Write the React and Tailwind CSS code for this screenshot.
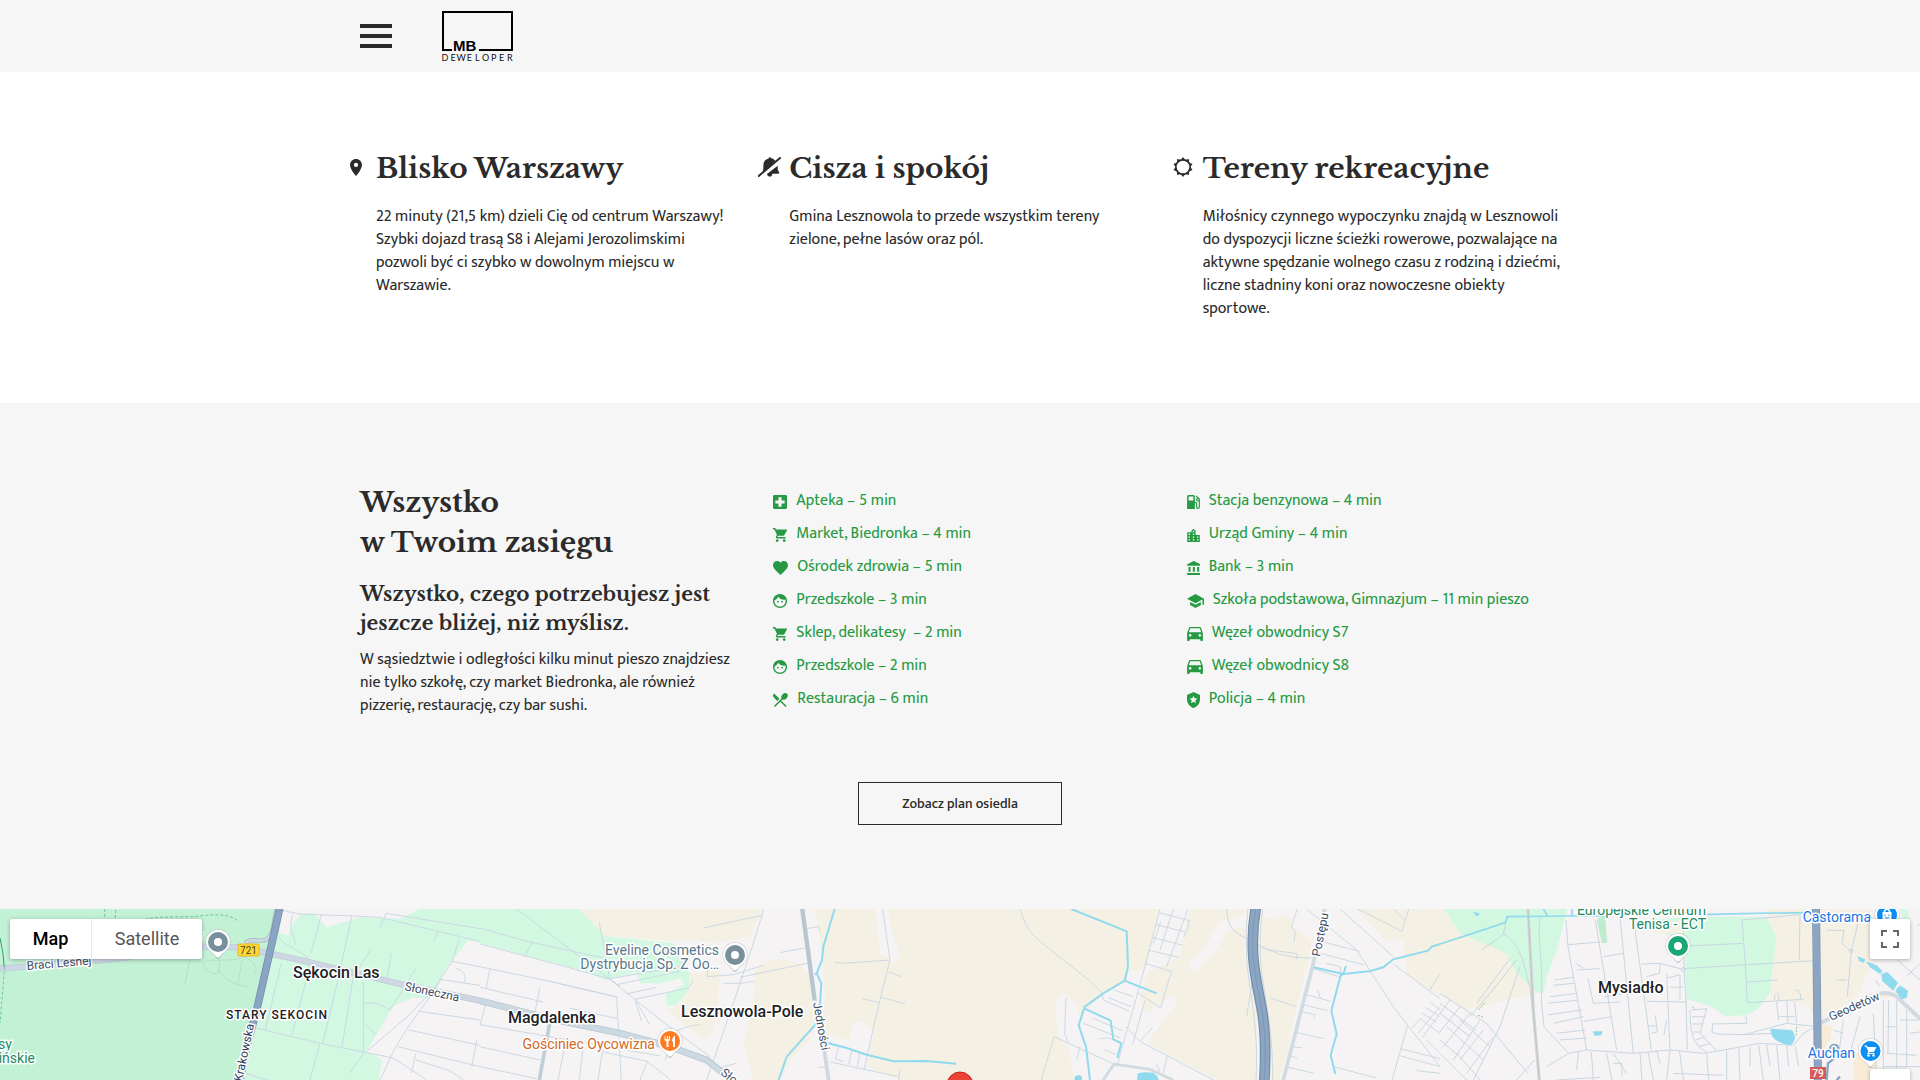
import React from "react";
import {
  MdPlace,
  MdLocalHospital,
  MdShoppingCart,
  MdFavorite,
  MdFace,
  MdRestaurantMenu,
  MdLocalGasStation,
  MdLocationCity,
  MdAccountBalance,
  MdSchool,
  MdDirectionsCar,
  MdLocalPolice,
} from "react-icons/md";

const serif = "font-['Libre_Baskerville','Liberation_Serif',serif] font-bold text-[#2b2b2b]";
const body = "text-base leading-[23px] text-[#2b2b2b]";

function Logo() {
  return (
    <svg width="74" height="54" viewBox="0 -1 74 54" role="img" aria-label="MB Deweloper">
      <path d="M11 40H2V2H71V40H38" fill="none" stroke="#000" strokeWidth="2" />
      <text x="12" y="41" fontFamily="Liberation Sans, sans-serif" fontWeight="700" fontSize="15">MB</text>
      {"DEWELOPER".split("").map((c, i) => (
        <text key={i} x={4 + i * 8.1} y="51" textAnchor="middle" fontFamily="Lato, sans-serif" fontSize="9" fill="#111">{c}</text>
      ))}
    </svg>
  );
}

function BellOff() {
  return (
    <svg width="23" height="20" viewBox="0 0 69 60" fill="#2b2b2b" aria-hidden="true">
      <path d="M12 48C20 36 13 24 19 13C22 7 28 6 31 5C33 0 38 0 40 4C44 5 48 7 52 12Z" />
      <path d="M27 51L59 26C59 34 58 38 63 44C65 47 63 50 61 50H43C43 58 36 61 32 58C29 57 28 54 27 51Z" />
      <path d="M2 57L66 3" stroke="#2b2b2b" strokeWidth="6" strokeLinecap="round" />
    </svg>
  );
}

function Sun() {
  const rays = Array.from({ length: 10 }, (_, i) => i * 36);
  return (
    <svg width="20" height="20" viewBox="-30 -30 60 60" aria-hidden="true">
      <circle r="21.5" fill="none" stroke="#2b2b2b" strokeWidth="5" />
      {rays.map((a) => (
        <path key={a} d="M-7 -21L0 -30L7 -21Z" fill="#2b2b2b" transform={`rotate(${a})`} />
      ))}
    </svg>
  );
}

const features = [
  {
    title: "Blisko Warszawy",
    icon: <MdPlace viewBox="5 2 14 20" className="h-[17px] w-3 text-[#2b2b2b]" />,
    pad: "pr-[14px]",
    lines: [
      "22 minuty (21,5 km) dzieli Cię od centrum Warszawy!",
      "Szybki dojazd trasą S8 i Alejami Jerozolimskimi",
      "pozwoli być ci szybko w dowolnym miejscu w",
      "Warszawie.",
    ],
  },
  {
    title: "Cisza i spokój",
    icon: <BellOff />,
    pad: "pr-2",
    lines: ["Gmina Lesznowola to przede wszystkim tereny", "zielone, pełne lasów oraz pól."],
  },
  {
    title: "Tereny rekreacyjne",
    icon: <Sun />,
    pad: "pr-[10px]",
    lines: [
      "Miłośnicy czynnego wypoczynku znajdą w Lesznowoli",
      "do dyspozycji liczne ścieżki rowerowe, pozwalające na",
      "aktywne spędzanie wolnego czasu z rodziną i dziećmi,",
      "liczne stadniny koni oraz nowoczesne obiekty",
      "sportowe.",
    ],
  },
];

const nearLeft = [
  [MdLocalHospital, "3 3 18 18", "w-[14px] h-[14px]", "Apteka – 5 min"],
  [MdShoppingCart, "1 2 20 20", "w-[14px] h-[14px]", "Market, Biedronka – 4 min"],
  [MdFavorite, "2 3 20 18.35", "w-[15px] h-[14px]", "Ośrodek zdrowia – 5 min"],
  [MdFace, "2 2 20 20", "w-[14px] h-[14px]", "Przedszkole – 3 min"],
  [MdShoppingCart, "1 2 20 20", "w-[14px] h-[14px]", "Sklep, delikatesy\u00a0 – 2 min"],
  [MdFace, "2 2 20 20", "w-[14px] h-[14px]", "Przedszkole – 2 min"],
  [MdRestaurantMenu, "2.7 3 19.2 18.3", "w-[15px] h-[14px]", "Restauracja – 6 min"],
];

const nearRight = [
  [MdLocalGasStation, "4 3 16.5 18", "w-[13px] h-[14px]", "Stacja benzynowa – 4 min"],
  [MdLocationCity, "3 1 18 20", "w-[13px] h-[14px]", "Urząd Gminy – 4 min"],
  [MdAccountBalance, "2 1 19 21", "w-[13px] h-[14px]", "Bank – 3 min"],
  [MdSchool, "1 3 22 18", "w-[17px] h-[14px]", "Szkoła podstawowa, Gimnazjum – 11 min pieszo"],
  [MdDirectionsCar, "3 5 18 16", "w-4 h-[14px]", "Węzeł obwodnicy S7"],
  [MdDirectionsCar, "3 5 18 16", "w-4 h-[14px]", "Węzeł obwodnicy S8"],
  [MdLocalPolice, "3 1 18 22", "w-[13px] h-4", "Policja – 4 min"],
];

function NearList({ items }) {
  return (
    <ul className="pt-px">
      {items.map(([Icon, box, size, label], i) => (
        <li key={i} className="flex h-[33px] items-center gap-[9px] whitespace-nowrap text-base text-[#259a43]">
          <Icon viewBox={box} className={`${size} mt-0.5 shrink-0`} aria-hidden="true" />
          {label}
        </li>
      ))}
    </ul>
  );
}

/* Marker drop with its tip at the bottom, centred on the disc. */
function Pin({ x, y, color, children }) {
  return (
    <g transform={`translate(${x} ${y})`}>
      <path d="M0 17C-2 17 -3 13 -7 10A12.5 12.5 0 1 1 7 10C3 13 2 17 0 17Z" fill="#8b8f94" opacity="0.45" />
      <path d="M0 15.500C-2 15.500 -3 12 -7 9.500A12 12 0 1 1 7 9.500C3 12 2 15.500 0 15.500Z" fill="#fff" />
      <circle r="10" fill={color} />
      {children}
    </g>
  );
}

function Label({ x, y, size = 14, color = "#202124", weight = 500, anchor = "start", rotate, children }) {
  return (
    <text
      x={x}
      y={y}
      fontFamily="Roboto, sans-serif"
      fontSize={size}
      fontWeight={weight}
      fill={color}
      stroke="#fff"
      strokeWidth="3"
      strokeLinejoin="round"
      paintOrder="stroke"
      textAnchor={anchor}
      transform={rotate ? `rotate(${rotate} ${x} ${y})` : undefined}
    >
      {children}
    </text>
  );
}

function TileOne() {
  return (
    <g>
      <path d="M0 0H840L760 380L720 540H0Z" fill="#c3f1d5" />
      <path d="M846 0H1440V128L1404 122L1340 200L1320 240L1290 296L1240 292L1180 318L1100 454L1146 480L1136 540H720L770 370Z" fill="#d2f8e2" />
      <path d="M846 27H1260L1200 56L1080 52L980 82L940 40L900 44L872 80L866 106L838 98Z" fill="#f5f3f4" />
      <g fill="none" stroke="#ccd8e4" strokeWidth="3">
        <path d="M840 30L900 42L1060 48L1140 52L1440 124M1140 84L1158 40L1440 86M964 44L934 158M1056 48L1000 300L968 430M878 44C860 100 890 110 884 134M836 110C850 140 910 150 926 180L922 230M1112 150L1060 230L1026 440M1174 160L1160 240M1314 96L1300 124M1378 116L1356 184L1300 270L1222 350L1100 454M844 190L796 390M922 230L876 404M1090 246V460L1050 520M1248 206L1170 330M1092 310C1130 305 1150 316 1172 332M1094 374C1110 380 1120 396 1124 404M768 384L960 430L1180 474L1220 500L1280 540M960 430L930 540M1356 184L1440 200M1366 206C1400 210 1400 240 1390 252M1320 238L1440 256M1322 240C1290 300 1220 370 1170 476L1140 540M1256 334L1440 360M1226 390L1440 436M1194 440L1440 500M1248 460L1234 520M1430 420L1416 500M1248 480L1350 512L1390 540M736 520L800 540" />
        <path d="M570 180L554 254M660 176L656 220C640 224 606 210 612 190C620 170 700 190 730 170C780 190 770 220 760 222M656 210C680 240 690 250 742 260M726 180L714 250" stroke="#b7dccb" />
      </g>
      <path d="M0 206L250 186L400 170M600 140L720 142L900 180L1200 252L1440 302" fill="none" stroke="#bcc9d8" strokeWidth="19" />
      <path d="M0 206L250 186L400 170M600 140L720 142L900 180L1200 252L1440 302" fill="none" stroke="#cdd6e2" strokeWidth="15" />
      <path d="M736 130C750 110 780 130 800 118C824 100 820 60 830 27" fill="none" stroke="#aab9c8" strokeWidth="13" />
      <path d="M736 130C750 110 780 130 800 118C824 100 820 60 830 27" fill="none" stroke="#cdd9e1" strokeWidth="8" />
      <path d="M840 20L826 84L770 330L740 440L716 560" fill="none" stroke="#728fb1" strokeWidth="23" />
      <path d="M840 20L826 84L770 330L740 440L716 560" fill="none" stroke="#8aa4c1" strokeWidth="18" />
      <g fill="none" stroke="#6cc6a3" strokeWidth="3" strokeDasharray="9 6">
        <path d="M314 27V70M347 30L345 70M436 58C480 46 560 54 600 48C660 40 700 46 716 66M14 200L0 370" />
      </g>
      <path d="M0 114C8 150 12 180 12 200" fill="none" stroke="#2e9e68" strokeWidth="3" />
    </g>
  );
}

function TileTwo() {
  return (
    <g transform="translate(1440 0)">
      <path d="M0 0H290L374 108L580 130L628 220L626 270L590 314L560 318L558 282L610 254L606 234L540 250H480L470 216L380 240L300 210L0 130Z" fill="#d2f8e2" />
      <path d="M290 20H852L810 110L700 130L640 120L576 124L374 108Z" fill="#f5f0e4" />
      <path d="M628 220L720 210L712 330L700 400L670 420L560 330L600 312L626 270Z" fill="#f5f0e4" />
      <path d="M1000 20H1186L1200 160L1240 190L1260 170L1236 90L1222 20H1440V540H1260L1160 500L1180 400L1150 362L1118 372L1110 420L1020 400L1036 300L1020 100Z" fill="#f5f0e4" />
      <path d="M826 210C850 180 900 170 960 190L990 230L1010 340L990 420L930 480L900 540H820L790 430L816 330Z" fill="#f5f0e4" />
      <g fill="none" stroke="#ccd8e4" strokeWidth="3">
        <path d="M0 84L140 124L370 174M110 27L420 260M358 68L390 240M158 124L134 170M0 132L220 190L386 236L560 374L690 470M0 200L200 242L410 290L424 540M200 242L412 292M0 262L190 306M180 262L164 340M30 206L18 266M268 324L412 356M0 374L210 410L540 468M0 440L180 480M0 500L170 536M16 318L0 376M254 440L234 540M312 420L298 540M368 450L354 540M370 456L502 484L572 540M502 484L480 540M410 254L600 214M438 282L530 262M464 298L626 264L640 240M390 236L600 200M464 298L484 362M470 306L508 372M590 392C620 380 640 376 660 374M852 27L820 130L760 310L680 540M670 84L846 46M684 200L682 230L760 224L850 196M780 232L982 190M732 250H780L822 244M900 158L974 144M980 86L1016 80L1020 96M1208 27L1230 180L1190 340L1152 510M1064 186L1090 190L1230 180M1226 216L1264 230M1146 296L1200 308M1204 292L1270 310L1276 304M1076 440L1066 476L1090 484M1116 450L1106 494M1140 456L1132 500M1050 486L1256 530M1260 508L1256 540M1016 502H1040M720 504L768 490M556 480L570 440" />
      </g>
      <path d="M0 302L210 356L420 400L570 440L680 480L780 560" fill="none" stroke="#b4c3d0" strokeWidth="20" />
      <path d="M0 302L210 356L420 400L570 440L680 480L780 560" fill="none" stroke="#ccd8e2" strokeWidth="16" />
      <path d="M210 364L178 540" fill="none" stroke="#c0ced9" strokeWidth="11" />
      <path d="M966 20L1004 300" fill="none" stroke="#b9c5cf" strokeWidth="13" />
      <path d="M1004 300L1030 430L1046 540" fill="none" stroke="#d1dae1" strokeWidth="12" />
      <path d="M1064 27L1030 140L1026 180L1010 220L1024 250L1018 350L1004 376L920 470L896 540M1004 222H1012M1040 428L1100 444L1160 464L1240 484L1340 483L1428 491" fill="none" stroke="#90daee" strokeWidth="6" />
    </g>
  );
}

function TileThree() {
  return (
    <g transform="translate(2880 0)">
      <path d="M0 20H600L560 200L500 220L490 250L420 290L380 330L360 360L350 310L310 280L288 300L292 400L330 450L340 540H0Z" fill="#f5f0e4" />
      <path d="M690 20H860L850 150L890 330L890 540H770L620 460L550 420L650 300L630 290L560 340L540 300L560 220L660 170Z" fill="#f5f0e4" />
      <path d="M880 54L980 50L1010 90L1056 120L1040 200L1000 360L980 460L960 540H930L926 380L900 250Z" fill="#f5f0e4" />
      <path d="M1180 20H1440V290L1340 220L1330 120L1280 120Z" fill="#f5f0e4" />
      <path d="M860 60L790 80L750 150L704 196" fill="none" stroke="#f5f3f4" strokeWidth="34" strokeLinecap="round" />
      <path d="M640 300L600 350L550 420" fill="none" stroke="#f5f3f4" strokeWidth="30" strokeLinecap="round" />
      <g fill="none" stroke="#ccd9e1" strokeWidth="3">
        <path d="M180 27C200 90 210 100 260 140C320 190 380 230 424 276L430 300L508 334M600 27L544 240L470 500M640 27L600 150M684 27L620 200M598 38L688 62L680 96M590 74L676 96L672 112M576 112L668 136M564 150L656 172M554 190L634 214L602 324L530 276M602 66L580 130M462 270L520 290M444 292L512 320M398 354L486 392M370 370L482 414M434 450L470 464M420 418C430 410 450 416 460 418M318 294L314 400L324 426M282 410L244 540M282 410L462 492M360 440L350 480M498 380L540 424L760 540M578 382L540 424M555 300L518 434M622 466L610 520M590 492L600 516M800 27C800 90 840 110 880 122C920 160 960 150 1012 162L1010 178M890 134C940 156 970 174 1056 174M930 294L1010 320M1012 27L994 80L1006 96L1002 126M1040 27L1190 150L1300 320L1440 500M1140 27L1300 170M1180 20L1326 94L1346 27M1300 27L1334 60M1090 126L1198 154M1066 156L1210 194M1300 192L1440 296M1410 270L1440 220M1060 206L1136 230M1040 284L1112 304M1072 270L1082 296M1030 314L1102 332M1026 336L1066 344L1062 356M1012 398L1090 416M1000 440L1026 444M990 466L1012 476M984 502L1064 520M1342 380L1296 540M1320 446L1440 476M1120 500L1250 534M1370 512L1440 520M1322 468L1440 500M1356 384L1380 356L1440 400M1374 400L1440 320M1388 412L1440 340M1400 420L1440 460M1410 306L1440 330M1396 322L1440 350M1384 338L1430 366M1098 190L1140 200L1142 220" />
        <path d="M894 134L860 350M864 27C840 240 900 300 888 540M908 27C880 240 940 300 938 540" />
      </g>
      <path d="M888 20C860 180 900 270 910 360Q920 440 912 560" fill="none" stroke="#6f8dad" strokeWidth="32" />
      <path d="M888 20C860 180 900 270 910 360Q920 440 912 560" fill="none" stroke="#8ca6c2" strokeWidth="25" />
      <path d="M888 20C860 180 900 270 910 360Q920 440 912 560" fill="none" stroke="#7b98b7" strokeWidth="3" />
      <path d="M1094 27L1060 190L970 540" fill="none" stroke="#d0dbe2" strokeWidth="11" />
      <path d="M430 540L462 492L570 508L640 540" fill="none" stroke="#d0dbe2" strokeWidth="9" />
      <path d="M334 27L500 94L504 200L494 242L590 280M494 242L430 280L374 320L356 376L378 440L390 540M374 326L452 362L460 418L484 430L472 474M1060 202L1150 222L1228 214L1270 202L1300 178L1404 152L1416 140L1440 132M1158 198L1150 222L1142 226L1114 332L1130 402L1112 466L1126 522" fill="none" stroke="#90daee" strokeWidth="6" />
      <path d="M532 540V522Q540 514 580 518Q596 530 596 540ZM344 540V530Q356 520 366 530V540Z" fill="#90daee" />
    </g>
  );
}

function TileFour() {
  return (
    <g transform="translate(4320 0)">
      <path d="M0 27H380L350 160L300 280L200 300L120 320L70 330L0 280Z" fill="#f5f0e4" />
      <path d="M12 27H382L350 150L320 230L310 280L290 276L230 220L200 160L60 100Z" fill="#d2f8e2" />
      <path d="M600 60L760 50H980L1010 110L990 280L950 330L920 346L854 348L820 322L740 296L734 120L640 90Z" fill="#d2f8e2" />
      <path d="M470 60L494 40L502 128L486 130Z" fill="#bfeccf" />
      <path d="M600 70L740 60L736 100L650 100ZM976 27H1290L1288 200L1260 280L1180 340L1140 380L1100 310L990 300L1010 110Z" fill="#f5f0e4" />
      <path d="M1140 370L1176 380L1170 420L1150 450H1140ZM1240 460H1310V540H1240ZM1300 280L1370 276V286L1310 296Z" fill="#f8ecd6" />
      <path d="M1380 27H1400L1410 60H1390Z" fill="#d2f8e2" />
      <g fill="none" stroke="#c8d6e1" strokeWidth="3">
        <path d="M200 60L190 100C250 140 250 200 270 260L296 540M300 50C290 120 310 160 304 300L312 380L386 460M240 200L180 380L100 540M0 280L140 370L180 420L264 520M0 310L110 392M0 340L90 410M30 300L0 340M60 320L0 396M90 340L10 440M120 360L40 480M0 420L60 470L120 540M0 460L80 540M60 360L150 440M20 380L130 480M130 390L60 480M160 410L80 520M230 180L150 280L90 350M210 176L110 310M284 480L230 540M126 148L196 100M378 60L384 140L440 450M466 60L530 450M540 50L580 460M580 50L634 450M386 134L480 126M410 210L480 206M406 190L430 204M344 240L402 232M340 256L402 250M330 290L412 280M326 310L416 300M326 344L426 330M340 370L430 350M350 400L436 390M360 420L440 414M430 364L516 350M490 170L550 160M494 290L560 280M444 236L460 310L540 306M604 192L660 190L728 208M620 304L740 306M680 220L690 450M730 60L732 200L738 300L742 450M660 190L658 220L620 230M684 234L720 224V300M690 262H730M622 378H650L652 396L634 400M646 346L650 380M680 360L672 404M750 138L908 130M730 206L1120 182M906 60L916 190L922 308L1090 298M906 60L1080 44L1078 180M918 246L1014 240M1004 300V286Q1010 274 1016 286V300M1066 270Q1084 270 1082 296M1010 306L1016 360M1040 300L1044 370M1016 350H1064M1064 306L1070 370M818 372L920 370L918 346M818 372L816 396L830 402L912 404L1040 370L1130 380M912 404L1000 400M754 330L800 326L780 400L830 452M750 330C750 420 770 440 800 456M756 350H796M756 372H790M760 396H784M768 420L796 410M776 440L812 430M386 460L440 450L580 460L690 450L790 460L840 452L960 430L1060 436L1090 400L1130 380M386 460L320 500M416 456L410 510M454 456L460 540M500 460L516 540M520 460L560 520M600 456L606 540M624 456L640 540M650 450L660 490M690 450L680 540M718 450L730 540M800 460L806 540M860 452V540M896 440L900 540M930 440V500M956 436L970 540M980 432L990 500M1010 436L1020 540M1040 436L1046 500M1066 440L1076 500M700 520L850 526M350 540L480 532M1160 90L1212 92L1206 130L1234 154L1222 290M1234 154L1256 60M1190 240H1220M1306 240L1320 260M1330 300V540M1346 300L1344 460M1370 300V540M1400 330V500M1300 340L1310 540M1340 460L1430 466M1330 500H1440M1210 360L1194 480M1180 390L1210 400M1260 350L1230 460M1380 360H1440M1340 380H1370M1410 400L1440 396M1372 180L1440 240M1400 230L1440 190M1430 80L1440 70M520 490H546V530" />
        <circle cx="730" cy="208" r="6" />
        <circle cx="1234" cy="154" r="5" />
      </g>
      <path d="M264 27L280 330L298 540" fill="none" stroke="#d2d5d8" strokeWidth="9" />
      <path d="M264 27L280 330L298 540" fill="none" stroke="#c2c6ca" strokeWidth="3" />
      <path d="M1140 370L1260 310C1300 280 1340 270 1370 290L1440 356" fill="none" stroke="#cfdae2" strokeWidth="12" />
      <path d="M1128 20L1134 540" fill="none" stroke="#7593b4" strokeWidth="24" />
      <path d="M1128 20L1134 540" fill="none" stroke="#8ba5c2" strokeWidth="20" />
      <path d="M1160 540L1164 490L1190 470M1190 540L1200 530M1170 450C1170 430 1196 430 1194 446L1180 476" fill="none" stroke="#8ba5c2" strokeWidth="7" />
      <path d="M0 132L80 106L196 68L202 50L380 48H500M780 44L940 40L1116 38M396 27V46M310 27L322 46" fill="none" stroke="#90daee" strokeWidth="5" />
      <path d="M990 386L1056 390Q1076 420 1050 436Q1010 430 996 408ZM458 394H488L484 406L464 408ZM1252 168L1276 178L1272 188L1258 184ZM1278 184L1310 196L1328 214L1320 222L1290 202ZM1324 222L1342 216L1374 248L1360 272L1326 242ZM1366 272L1380 256L1404 272L1400 294L1384 298ZM100 36L118 40L116 48L106 46Z" fill="#90daee" />
      <path d="M114 346L130 352M116 330L136 306M758 320L766 330M1070 380L1068 410" fill="none" stroke="#7cc998" strokeWidth="3" strokeDasharray="6 4" />
    </g>
  );
}

function MapCanvas() {
  return (
    <svg
      viewBox="0 9 1920 171"
      preserveAspectRatio="xMidYMin slice"
      className="block h-[171px] w-full bg-[#f5f3f4]"
      role="img"
      aria-label="Mapa okolicy"
    >
      <rect width="1920" height="180" fill="#f5f3f4" />
      <g transform="scale(0.33333)">
        <TileOne />
        <TileTwo />
        <TileThree />
        <TileFour />
      </g>

      <Label x={27} y={70} size={12} color="#3c4f66" weight={400} rotate={-5}>Braci Leśnej</Label>
      <Label x={196} y={41} color="#5b7283" weight={400}>y</Label>
      <rect x="238" y="44" width="21" height="12" rx="1" fill="#fdd835" stroke="#e8b42a" />
      <text x="248.500" y="54" fontFamily="Roboto, sans-serif" fontSize="10" fill="#4a4020" textAnchor="middle">721</text>
      <Label x={293} y={78} size={16}>Sękocin Las</Label>
      <text x="226" y="119" fontFamily="Roboto, sans-serif" fontSize="12" fontWeight="500" letterSpacing="1" fill="#202124" stroke="#fff" strokeWidth="3" strokeLinejoin="round" paintOrder="stroke">STARY SEKOCIN</text>
      <Label x={404} y={90} size={12} color="#3c4f66" weight={400} rotate={12}>Słoneczna</Label>
      <Label x={242} y={182} size={12} color="#2b3f5c" weight={400} rotate={-78}>Krakowska</Label>
      <Label x={-2} y={149} color="#1b8a5f" weight={400}>sy</Label>
      <Label x={35} y={163} color="#1b8a5f" weight={400} anchor="end">Sękocińskie</Label>

      <Label x={719} y={55} color="#5b7889" weight={400} anchor="end">Eveline Cosmetics</Label>
      <Label x={719} y={69} color="#5b7889" weight={400} anchor="end">Dystrybucja Sp. Z Oo…</Label>
      <Label x={508} y={123} size={16}>Magdalenka</Label>
      <Label x={681} y={117} size={16}>Lesznowola-Pole</Label>
      <Label x={655} y={149} color="#d2691e" weight={400} anchor="end">Gościniec Oycowizna</Label>
      <Label x={813} y={103} size={12} color="#3c4f66" weight={400} rotate={80}>Jedności</Label>
      <Label x={720} y={174} size={12} color="#3c4f66" weight={400} rotate={38}>Słoneczna</Label>

      <Label x={1320} y={57} size={12} color="#3c4f66" weight={400} rotate={-79}>Postępu</Label>

      <Label x={1706} y={15} color="#1b8a5f" weight={400} anchor="end">Europejskie Centrum</Label>
      <Label x={1706} y={29} color="#1b8a5f" weight={400} anchor="end">Tenisa - ECT</Label>
      <Label x={1598} y={93} size={16}>Mysiadło</Label>
      <Label x={1871} y={22} color="#1a73e8" weight={400} anchor="end">Castorama</Label>
      <Label x={1855} y={158} color="#1a73e8" weight={400} anchor="end">Auchan</Label>
      <Label x={1831} y={121} size={12} color="#3c4f66" weight={400} rotate={-24}>Geodetów</Label>
      <rect x="1810" y="167" width="16" height="12" fill="#d75a5a" />
      <text x="1818" y="176.500" fontFamily="Roboto, sans-serif" fontSize="10" fontWeight="500" fill="#fff" textAnchor="middle">79</text>

      <Pin x={218} y={42} color="#78909c"><circle r="4" fill="#fff" /></Pin>
      <Pin x={735} y={55} color="#78909c"><circle r="4" fill="#fff" /></Pin>
      <Pin x={670} y={141} color="#ff7b1f">
        <path d="M-5.500 -5V-1.500Q-5.500 0 -3.500 0V6H-1.500V0Q0 0 0 -1.500V-5H-1V-2H-2V-5H-3V-2H-4.500V-5ZM5 -5.500Q2 -4 2 0.500H3V6H5Z" fill="#fff" />
      </Pin>
      <Pin x={1678} y={46} color="#1aa774"><circle r="4" fill="#fff" /></Pin>
      <Pin x={1887} y={15} color="#0b8ff5">
        <path d="M-4.500 -3H4.500V5H-4.500Z" fill="#fff" />
        <path d="M-2.500 -2V-4Q0 -8 2.500 -4V-2" fill="none" stroke="#fff" strokeWidth="1.500" />
        <path d="M-2 -0.500V1M2 -0.500V1M-2 2.500Q0 4 2 2.500" fill="none" stroke="#0b8ff5" />
      </Pin>
      <Pin x={1870.500} y={151} color="#0b8ff5">
        <path d="M-6 -5H-4L-1.500 0.500H3L5 -3.500H-3" fill="#fff" stroke="#fff" strokeWidth="1.200" />
        <path d="M-1.500 0.500L-2.500 2.500H4" fill="none" stroke="#fff" strokeWidth="1.200" />
        <circle cx="-2" cy="4.500" r="1.200" fill="#fff" />
        <circle cx="3" cy="4.500" r="1.200" fill="#fff" />
      </Pin>
      <circle cx="960" cy="185" r="13" fill="#ea4335" stroke="#c5221f" />
    </svg>
  );
}

export default function App() {
  return (
    <div className="overflow-x-hidden bg-white font-['Mukta','Ek_Mukta',Lato,sans-serif]">
      <header className="bg-[#f6f6f6]">
        <div className="mx-auto flex h-[72px] max-w-[1200px] items-center gap-[49px]">
          <button type="button" aria-label="Menu" className="flex w-8 flex-col gap-1.5">
            <span className="h-1 w-full bg-[#2b2b2b]" />
            <span className="h-1 w-full bg-[#2b2b2b]" />
            <span className="h-1 w-full bg-[#2b2b2b]" />
          </button>
          <a href="#">
            <Logo />
          </a>
        </div>
      </header>

      <main>
        <section className="pt-[77px] pb-[83px]">
          <div className="mx-auto grid max-w-[1200px] grid-cols-3 gap-10">
            {features.map((f) => (
              <article key={f.title} className="relative pl-4">
                <div className={`absolute top-0 right-full flex h-9 translate-x-4 items-center ${f.pad}`}>{f.icon}</div>
                <h2 className={`${serif} text-[28px] leading-10 whitespace-nowrap`}>{f.title}</h2>
                <p className={`${body} mt-4 whitespace-nowrap`}>
                  {f.lines.map((l) => (
                    <React.Fragment key={l}>
                      {l}
                      <br />
                    </React.Fragment>
                  ))}
                </p>
              </article>
            ))}
          </div>
        </section>

        <section className="bg-[#f6f6f6] pt-20 pb-[84px]">
          <div className="mx-auto grid max-w-[1200px] grid-cols-3 gap-10">
            <div>
              <h2 className={`${serif} text-[28px] leading-10`}>
                Wszystko
                <br />w Twoim zasięgu
              </h2>
              <h3 className={`${serif} mt-[17px] text-xl leading-[29px] whitespace-nowrap`}>
                Wszystko, czego potrzebujesz jest
                <br />
                jeszcze bliżej, niż myślisz.
              </h3>
              <p className={`${body} mt-2.5 whitespace-nowrap`}>
                W sąsiedztwie i odległości kilku minut pieszo znajdziesz
                <br />
                nie tylko szkołę, czy market Biedronka, ale również
                <br />
                pizzerię, restaurację, czy bar sushi.
              </p>
            </div>
            <NearList items={nearLeft} />
            <NearList items={nearRight} />
          </div>
          <div className="mt-[65px] flex justify-center">
            <a href="#" className="flex h-[43px] w-[204px] items-center justify-center border border-[#2b2b2b] text-sm font-medium text-[#2b2b2b]">
              Zobacz plan osiedla
            </a>
          </div>
        </section>

        <section className="relative overflow-hidden font-[Roboto,sans-serif]">
          <MapCanvas />
          <div className="absolute top-2.5 left-2.5 flex h-10 rounded-xs bg-white text-lg shadow-[0_1px_4px_rgba(0,0,0,0.3)]">
            <button type="button" className="w-[82px] border-r border-[#e8e8e8] font-medium text-black">
              Map
            </button>
            <button type="button" className="w-[110px] text-[#565656]">
              Satellite
            </button>
          </div>
          <button
            type="button"
            aria-label="Toggle fullscreen view"
            className="absolute top-2.5 right-2.5 flex size-10 items-center justify-center rounded-xs bg-white shadow-[0_1px_4px_rgba(0,0,0,0.3)]"
          >
            <svg width="18" height="18" viewBox="0 0 18 18" fill="#666" aria-hidden="true">
              <path d="M0 0v6h2V2h4V0H0zm16 0h-4v2h4v4h2V0h-2zm0 16h-4v2h6v-6h-2v4zM2 12H0v6h6v-2H2v-4z" />
            </svg>
          </button>
          <button type="button" aria-label="Zoom in" className="absolute top-40 right-2.5 size-10 rounded-xs bg-white shadow-[0_1px_4px_rgba(0,0,0,0.3)]" />
        </section>
      </main>
    </div>
  );
}
